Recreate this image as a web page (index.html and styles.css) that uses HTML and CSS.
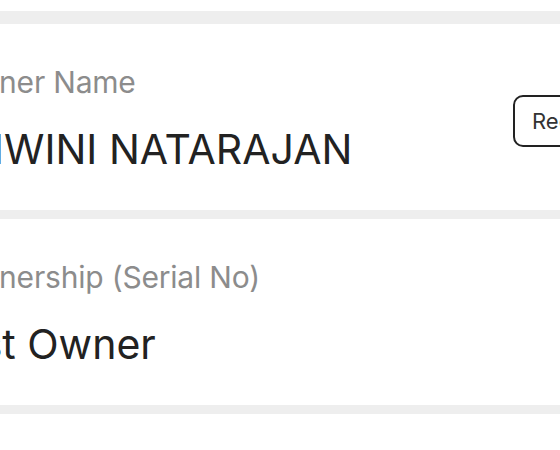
FILE: index.html
```html
<!DOCTYPE html>
<html>
<head>
<meta charset="utf-8">
<link rel="stylesheet" href="styles.css">
</head>
<body>
<div class="screen">
  <div class="sep sep-top"></div>
  <section class="card">
    <div class="info">
      <div class="label">Owner Name</div>
      <div class="value value-name">ASHWINI NATARAJAN</div>
    </div>
    <button class="btn">Request</button>
  </section>
  <div class="sep"></div>
  <section class="card">
    <div class="info">
      <div class="label">Ownership (Serial No)</div>
      <div class="value">1st Owner</div>
    </div>
  </section>
  <div class="sep"></div>
</div>
</body>
</html>
```
FILE: styles.css
```css
html, body {
  margin: 0;
  padding: 0;
  background: #ffffff;
  overflow: hidden;
}
.screen {
  width: 767px;
  margin-left: -64px;
  padding-top: 11px;
  font-family: Inter, "Noto Sans", sans-serif;
}
.sep {
  height: 9px;
  background: #eeeeee;
}
.sep-top {
  height: 13px;
}
.card {
  display: flex;
  align-items: center;
  justify-content: space-between;
  height: 186px;
  box-sizing: border-box;
  padding: 3px 0 0 16px;
}
.info {
  display: flex;
  flex-direction: column;
  gap: 24px;
}
.label {
  font-size: 30px;
  line-height: 36px;
  color: #8c8c8c;
  letter-spacing: -0.2px;
}
.value {
  font-size: 41px;
  line-height: 50px;
  color: #222222;
  padding-left: 12px;
}
.value-name {
  padding-left: 0;
  margin-left: -33px;
}
.btn {
  width: 190px;
  height: 52px;
  border: 2px solid #222;
  border-radius: 10px;
  background: #fff;
  font-family: Inter, sans-serif;
  font-size: 22px;
  color: #333;
  text-align: left;
  padding-left: 17px;
  margin-top: 5px;
}
```
